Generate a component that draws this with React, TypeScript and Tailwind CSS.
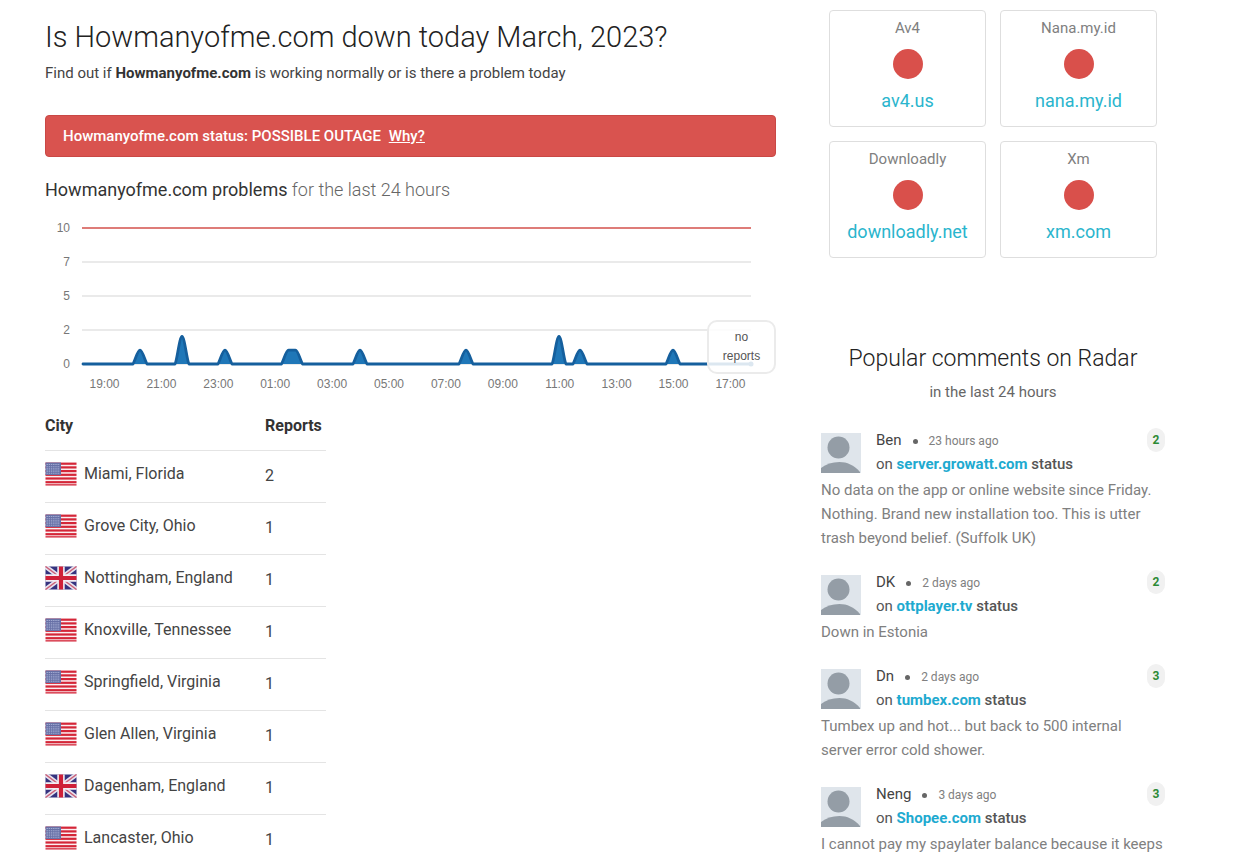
type Country = "us" | "gb";

const cities: { name: string; country: Country; reports: number }[] = [
  { name: "Miami, Florida", country: "us", reports: 2 },
  { name: "Grove City, Ohio", country: "us", reports: 1 },
  { name: "Nottingham, England", country: "gb", reports: 1 },
  { name: "Knoxville, Tennessee", country: "us", reports: 1 },
  { name: "Springfield, Virginia", country: "us", reports: 1 },
  { name: "Glen Allen, Virginia", country: "us", reports: 1 },
  { name: "Dagenham, England", country: "gb", reports: 1 },
  { name: "Lancaster, Ohio", country: "us", reports: 1 },
];

const sites = [
  { name: "Av4", host: "av4.us" },
  { name: "Nana.my.id", host: "nana.my.id" },
  { name: "Downloadly", host: "downloadly.net" },
  { name: "Xm", host: "xm.com" },
];

const comments = [
  {
    author: "Ben",
    age: "23 hours ago",
    host: "server.growatt.com",
    votes: 2,
    text: "No data on the app or online website since Friday. Nothing. Brand new installation too. This is utter trash beyond belief. (Suffolk UK)",
  },
  { author: "DK", age: "2 days ago", host: "ottplayer.tv", votes: 2, text: "Down in Estonia" },
  {
    author: "Dn",
    age: "2 days ago",
    host: "tumbex.com",
    votes: 3,
    text: "Tumbex up and hot... but back to 500 internal server error cold shower.",
  },
  {
    author: "Neng",
    age: "3 days ago",
    host: "Shopee.com",
    votes: 3,
    text: "I cannot pay my spaylater balance because it keeps",
  },
];

function Flag({ country }: { country: Country }) {
  if (country === "gb") {
    return (
      <svg viewBox="0 0 32 24" className="h-6 w-8 shrink-0" role="img" aria-label="United Kingdom">
        <rect x="0.5" y="0.5" width="31" height="23" fill="#35337f" />
        <path d="M0.5 0.5 31.5 23.5M31.5 0.5 0.5 23.5" stroke="#e6e2ee" strokeWidth="4.6" />
        <path d="M0.5 0.5 31.5 23.5M31.5 0.5 0.5 23.5" stroke="#cc6078" strokeWidth="1.4" />
        <path d="M16 0.5V23.5M0.5 12H31.5" stroke="#f3eef4" strokeWidth="7.4" />
        <path d="M16 0.5V23.5M0.5 12H31.5" stroke="#cf2038" strokeWidth="4.2" />
      </svg>
    );
  }
  return (
    <svg viewBox="0 0 32 24" className="h-6 w-8 shrink-0" role="img" aria-label="United States">
      <rect x="0.5" y="0.5" width="31" height="23" fill="#fbeff1" />
      {[1, 4.7, 8.4, 12.1, 15.8, 19.5].map((y) => (
        <rect key={y} x="0.5" y={y - 0.4} width="31" height="2.2" fill="#d42638" />
      ))}
      <rect x="0.5" y="22.2" width="31" height="1.3" fill="#d42638" />
      <rect x="0.5" y="0.5" width="15.5" height="12.5" fill="#6770a6" />
      {[2.5, 4.7, 6.9, 9.1, 11.3].map((y) => (
        <path key={y} d={`M1.5 ${y}H15`} stroke="#a3abd2" strokeWidth="1.1" strokeDasharray="1.4 0.8" />
      ))}
    </svg>
  );
}

function Avatar() {
  return (
    <svg viewBox="0 0 40 40" className="mt-[5px] size-10 shrink-0" aria-hidden="true">
      <rect width="40" height="40" fill="#dfe5eb" />
      <circle cx="17.5" cy="14.5" r="11" fill="#949da6" />
      <path d="M0 40V35C5 31 11 29 18.500 29S33 32 39 39V40Z" fill="#949da6" />
    </svg>
  );
}

const BASE = 154;
const peaks: [number, number][] = [
  [95, 1], [137, 2], [180, 1], [247, 1], [315, 1], [421, 1], [514, 2], [535, 1], [628, 1],
];

function curve() {
  let d = `M38 ${BASE}`;
  for (const [x, count] of peaks) {
    const top = BASE - count * 13.8;
    const flat = x === 247 ? 3.5 : 0;
    const l = x - flat;
    const r = x + flat;
    d += `H${l - 7}C${l - 5} ${BASE - 3} ${l - 2.5} ${top} ${l} ${top}H${r}C${r + 2.5} ${top} ${r + 5} ${BASE - 3} ${r + 7} ${BASE}`;
  }
  return d + "H706";
}

function Chart() {
  const line = curve();
  const ticks = ["19:00", "21:00", "23:00", "01:00", "03:00", "05:00", "07:00", "09:00", "11:00", "13:00", "15:00", "17:00"];
  return (
    <div className="relative mt-2">
      <svg viewBox="0 0 731 186" className="block w-full font-[Liberation_Sans,sans-serif] text-xs" role="img" aria-label="Reports over the last 24 hours">
        {["7", "5", "2", "0"].map((label, i) => (
          <g key={label}>
            <path d={`M37 ${52 + i * 34}H706`} stroke="#eaeaea" strokeWidth="2" />
            <text x="25" y={56 + i * 34} textAnchor="end" fill="#777">{label}</text>
          </g>
        ))}
        <path d="M37 18H706" stroke="#de7c78" strokeWidth="2" />
        <text x="25" y="22" textAnchor="end" fill="#777">10</text>
        <path d={line + "Z"} fill="#1f77b8" />
        <path d={line} fill="none" stroke="#155f9d" strokeWidth="2.8" strokeLinejoin="round" strokeLinecap="round" />
        <circle cx="706" cy={BASE} r="2.5" fill="#155f9d" />
        {ticks.map((t, i) => (
          <text key={t} x={59.5 + i * 56.9} y="178" textAnchor="middle" fill="#777">{t}</text>
        ))}
      </svg>
      <div className="absolute right-0 bottom-[22px] w-[69px] rounded-[10px] border-2 border-[#ebebeb] bg-white/85 px-2 py-1.5 text-center font-[Liberation_Sans,sans-serif] text-xs leading-[19px] text-[#555]">
        no reports
      </div>
    </div>
  );
}

export default function App() {
  return (
    <div className="h-screen overflow-hidden bg-white pr-[76px] pl-[45px] font-[Roboto,sans-serif] text-[15px] leading-6 text-[#444]">
      <div className="grid grid-cols-[minmax(0,1fr)_344px] gap-[45px]">
        <main className="pt-[17px]">
          <h1 className="text-[29px] leading-10 font-light text-[#222]">Is Howmanyofme.com down today March, 2023?</h1>
          <p className="mt-1">
            Find out if <strong className="font-bold text-[#333]">Howmanyofme.com</strong> is working normally or is there a problem today
          </p>
          <div className="mt-[30px] rounded border border-[#c94845] bg-[#d9534f] px-[17px] py-2 font-medium text-white">
            Howmanyofme.com status: POSSIBLE OUTAGE{" "}
            <a href="#why" className="ml-1 underline">Why?</a>
          </div>
          <h2 className="mt-[21px] text-lg leading-6 font-light text-[#666]">
            <span className="font-normal text-[#333]">Howmanyofme.com problems</span> for the last 24 hours
          </h2>
          <Chart />
          <table className="mt-1.5 w-[281px] border-collapse text-base">
            <thead>
              <tr className="h-12 border-b border-[#e4e4e4] text-left text-[#333]">
                <th className="w-[220px] font-bold">City</th>
                <th className="font-bold">Reports</th>
              </tr>
            </thead>
            <tbody>
              {cities.map((c) => (
                <tr key={c.name} className="h-[52px] border-b border-[#e4e4e4]">
                  <td className="pb-1">
                    <div className="flex gap-[7px]">
                      <Flag country={c.country} />
                      <span>{c.name}</span>
                    </div>
                  </td>
                  <td>{c.reports}</td>
                </tr>
              ))}
            </tbody>
          </table>
        </main>

        <aside>
          <div className="grid grid-cols-2 gap-3.5 px-2 pt-2.5">
            {sites.map((s) => (
              <div key={s.host} className="flex h-[117px] flex-col items-center rounded border border-[#dedede] pt-[5px]">
                <span className="text-[#808080]">{s.name}</span>
                <span className="mt-[9px] size-[30px] rounded-full bg-[#d9504b]" />
                <a href={`#${s.host}`} className="mt-2.5 text-lg leading-6 text-[#2ab5cd]">{s.host}</a>
              </div>
            ))}
          </div>
          <h2 className="mt-[85px] text-center text-[23px] leading-8 font-light text-[#222]">Popular comments on Radar</h2>
          <p className="mt-[5px] text-center text-[#666]">in the last 24 hours</p>
          <ul className="mt-6 flex flex-col gap-5">
            {comments.map((c) => (
              <li key={c.author}>
                <div className="flex">
                  <Avatar />
                  <div className="ml-[15px] flex-1">
                    <div className="flex items-center">
                      <span>{c.author}</span>
                      <span className="mx-[11px] mt-0.5 size-[5px] rounded-full bg-[#666]" />
                      <span className="mt-0.5 text-xs text-[#808080]">{c.age}</span>
                    </div>
                    <p className="font-medium text-[#555]">
                      <span className="font-normal">on</span> <a href={`#${c.host}`} className="font-bold text-[#1eaad0]">{c.host}</a> status
                    </p>
                  </div>
                  <span className="h-6 w-[18px] rounded-full bg-[#f1f1f1] text-center text-xs leading-6 font-bold text-[#2c8a35]">{c.votes}</span>
                </div>
                <p className="mt-0.5 text-[#808080]">{c.text}</p>
              </li>
            ))}
          </ul>
        </aside>
      </div>
    </div>
  );
}
